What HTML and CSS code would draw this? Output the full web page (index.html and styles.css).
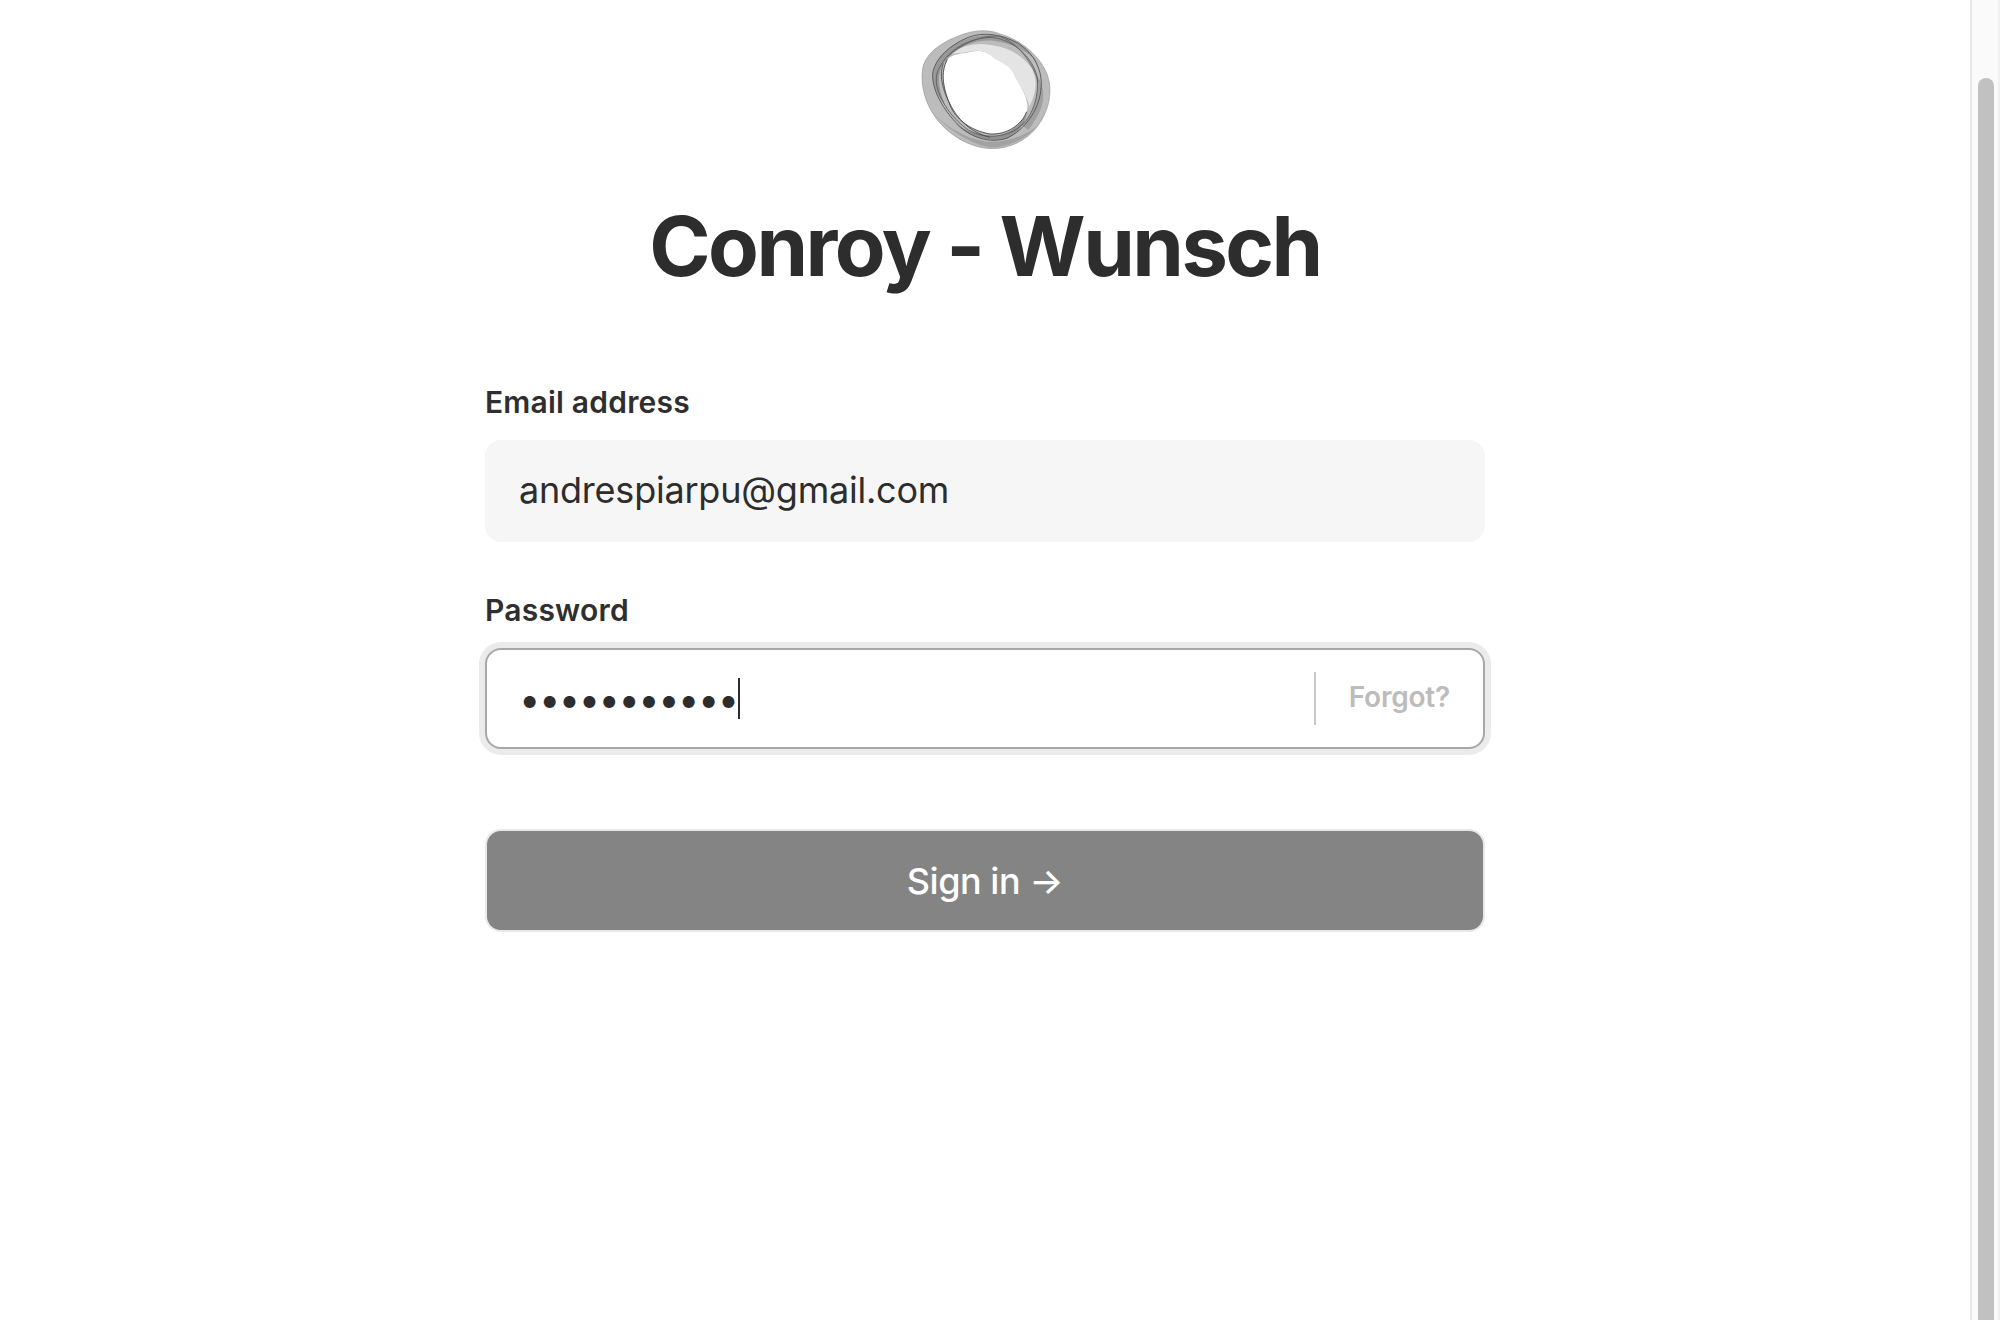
FILE: index.html
```html
<!DOCTYPE html>
<html lang="en">
<head>
<meta charset="utf-8">
<title>Conroy - Wunsch</title>
<link rel="stylesheet" href="styles.css">
</head>
<body>
<div class="page">
  <main class="content">
    <svg class="logo" viewBox="0 0 540 480" aria-hidden="true">
      <defs><filter id="soft"><feGaussianBlur stdDeviation="1.4"/></filter></defs>
      <g filter="url(#soft)">
        <path fill-rule="evenodd" fill="#bcbcbc" d="M97 185C100 130 160 95 205 78C245 62 290 55 330 72C395 90 450 140 470 190C490 240 478 300 445 345C410 395 350 420 290 415C230 408 170 370 135 320C110 285 92 235 97 185ZM172 148C150 190 160 235 180 285C195 325 240 362 300 372C350 375 395 345 410 305C420 275 395 235 378 205C365 165 340 160 315 145C295 125 270 118 240 126C215 132 190 130 172 148Z"/>
        <path fill="#e4e4e4" d="M180 132C215 108 255 98 295 104C345 108 395 130 425 175C445 215 438 250 418 290C410 250 385 225 372 195C360 165 335 160 312 145C290 122 265 118 235 125C215 130 195 128 180 132Z"/>
        <path fill="#757575" opacity=".5" d="M128 200C130 150 170 112 220 90C270 70 325 70 375 95C405 110 430 135 448 165C420 125 370 100 310 92C250 86 190 115 158 165C140 195 145 240 165 285C148 265 128 235 128 200Z"/>
        <path fill="#8d8d8d" opacity=".6" d="M440 195C470 240 470 290 415 360L395 345C430 315 450 250 440 195Z"/>
        <path fill="#666" opacity=".5" d="M195 340C240 385 300 398 352 385C385 370 405 340 412 305C395 345 355 375 310 378C270 378 230 365 195 340Z"/>
        <path fill="#888" opacity=".5" d="M120 300C165 350 225 395 295 412C340 415 400 395 440 350C400 380 345 398 290 395C225 385 165 350 120 300Z"/>
        <g fill="none" stroke-width="2.6">
          <path stroke="#4f4f4f" d="M128 190C135 145 180 105 235 82C280 65 335 72 385 100C430 130 462 180 452 245C445 300 405 360 350 385C300 400 245 385 205 345C160 300 125 240 128 190Z"/>
          <path stroke="#5a5a5a" d="M150 170C175 120 235 85 300 82C360 85 420 130 440 195C450 250 430 315 395 345C360 380 290 392 235 360C190 330 150 275 140 225C137 205 140 185 150 170Z"/>
          <path stroke="#3c3c3c" d="M172 148C150 190 160 235 180 285C195 325 240 362 300 372C350 375 395 345 410 305"/>
          <path stroke="#4a4a4a" d="M160 160C145 200 160 250 190 300C215 340 250 370 300 382"/>
          <path stroke="#606060" d="M172 140C210 105 270 75 325 78C375 92 425 150 445 215"/>
          <path stroke="#8f8f8f" stroke-width="1.8" d="M97 185C100 130 160 95 205 78C245 62 290 55 330 72C395 90 450 140 470 190C490 240 478 300 445 345C410 395 350 420 290 415C230 408 170 370 135 320C110 285 92 235 97 185Z"/>
        </g>
      </g>
    </svg>
    <h1 class="title">Conroy - Wunsch</h1>
    <form class="form">
      <div class="field">
        <label class="label">Email address</label>
        <div class="input input-filled">andrespiarpu@gmail.com</div>
      </div>
      <div class="field field-password">
        <label class="label">Password</label>
        <div class="input input-focused">
          <div class="password"><span class="dots">•••••••••••</span><span class="caret"></span></div>
          <a class="forgot">Forgot?</a>
        </div>
      </div>
      <div class="button">Sign in →</div>
    </form>
  </main>
  <div class="scrollbar"><div class="thumb"></div></div>
</div>
</body>
</html>
```
FILE: styles.css
```css
html, body { margin: 0; padding: 0; background: #fff; }
body { font-family: Inter, "Liberation Sans", sans-serif; color: #2d2d2d; }
.page { display: flex; width: 2000px; height: 1320px; overflow: hidden; }
.content { flex: 1; display: flex; flex-direction: column; align-items: center; padding-top: 10px; }
.logo { width: 180px; height: 160px; display: block; margin-right: 10px; flex: none; }
.title { margin: 28px 0 0; font-size: 83px; line-height: 96px; font-weight: 700; letter-spacing: -2.55px; text-align: center; }
.form { width: 1000px; margin-top: 90px; display: flex; flex-direction: column; }
.field { display: flex; flex-direction: column; }
.field-password { margin-top: 50px; }
.label { font-size: 30px; line-height: 36px; font-weight: 600; margin-bottom: 20px; letter-spacing: 0.2px; color: #2f2f2f; }
.input { box-sizing: border-box; height: 102px; border-radius: 16px; font-size: 36px; display: flex; align-items: center; padding: 0 34px; letter-spacing: -0.22px; }
.input-filled { background: #f6f6f6; padding-bottom: 2px; }
.input-focused { height: 101px; border: 2px solid #a8a8a8; box-shadow: 0 0 0 6px #ebebeb; background: #fff; padding: 0 33px 0 34px; }
.password { flex: 1; display: flex; align-items: center; margin-left: -2px; }
.dots { font-size: 38px; letter-spacing: -1.5px; line-height: 40px; }
.caret { width: 2px; height: 41px; background: #2d2d2d; margin-left: 0; }
.forgot { border-left: 2px solid #c8c8c8; height: 53px; line-height: 51px; padding-left: 33px; font-size: 28px; font-weight: 600; color: #bcbcbc; }
.button { box-sizing: border-box; margin-top: 80px; height: 103px; border-radius: 16px; border: 2px solid #e8e8e8; background: #848484; color: #fff; font-size: 36px; font-weight: 500; letter-spacing: -0.45px; display: flex; align-items: center; justify-content: center; }
.scrollbar { box-sizing: border-box; width: 30px; height: 100%; background: #fafafa; border-left: 2px solid #e8e8e8; border-right: 2px solid #f0f0f0; padding: 78px 4px 0 6px; }
.thumb { width: 16px; height: 100%; border-radius: 8px 8px 0 0; background: #c1c1c1; }
```
